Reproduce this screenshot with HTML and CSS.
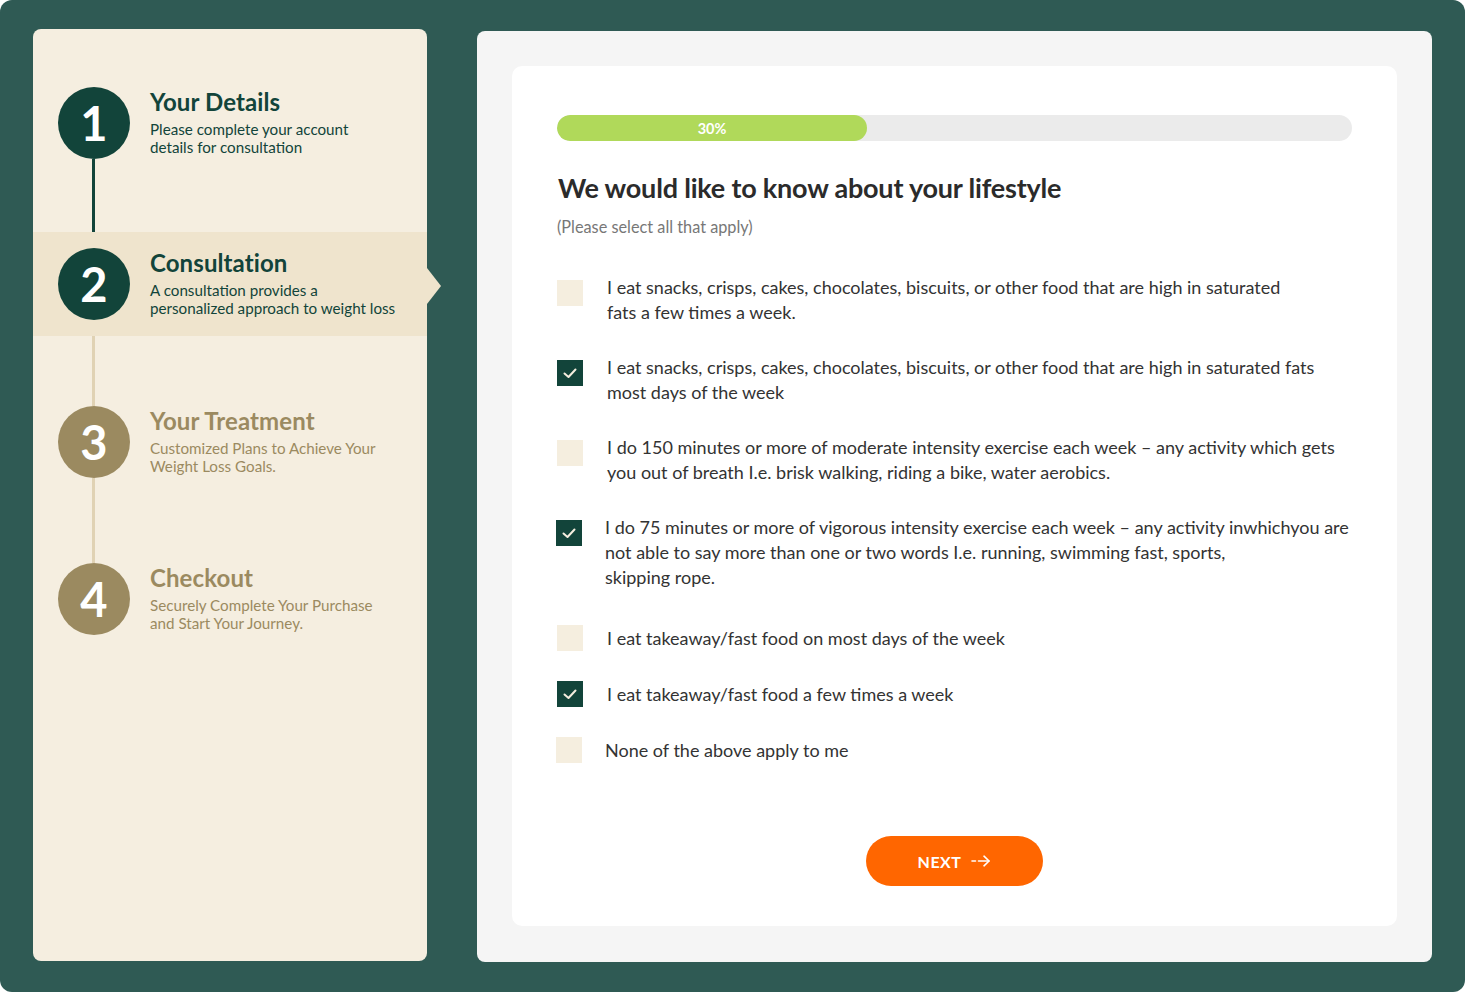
FILE: index.html
```html
<!DOCTYPE html>
<html lang="en">
<head>
<meta charset="utf-8">
<title>Consultation - Lifestyle</title>
<link rel="stylesheet" href="styles.css">
</head>
<body>
<div class="frame">
  <aside class="sidebar">
    <div class="step done">
      <div class="circle">1</div>
      <div class="step-text">
        <div class="step-title">Your Details</div>
        <div class="step-desc">Please complete your account<br>details for consultation</div>
      </div>
    </div>
    <div class="connector dark"></div>
    <div class="step active">
      <div class="circle">2</div>
      <div class="step-text">
        <div class="step-title">Consultation</div>
        <div class="step-desc">A consultation provides a<br>personalized approach to weight loss</div>
      </div>
    </div>
    <div class="connector c2"></div>
    <div class="step todo">
      <div class="circle">3</div>
      <div class="step-text">
        <div class="step-title">Your Treatment</div>
        <div class="step-desc">Customized Plans to Achieve Your<br>Weight Loss Goals.</div>
      </div>
    </div>
    <div class="connector c3"></div>
    <div class="step todo">
      <div class="circle">4</div>
      <div class="step-text">
        <div class="step-title">Checkout</div>
        <div class="step-desc">Securely Complete Your Purchase<br>and Start Your Journey.</div>
      </div>
    </div>
  </aside>

  <main class="panel">
    <section class="card">
      <div class="progress">
        <div class="progress-fill" style="width: 39%">30%</div>
      </div>
      <h1 class="question">We would like to know about your lifestyle</h1>
      <p class="hint">(Please select all that apply)</p>

      <ul class="options">
        <li class="option">
          <span class="box"></span>
          <span class="label">I eat snacks, crisps, cakes, chocolates, biscuits, or other food that are high in saturated<br>fats a few times a week.</span>
        </li>
        <li class="option">
          <span class="box checked"><svg viewBox="0 0 26 26" width="26" height="26"><polyline points="7.5,13.5 11.5,17 18.5,9.5" fill="none" stroke="#f5eedf" stroke-width="2" stroke-linecap="round" stroke-linejoin="round"/></svg></span>
          <span class="label">I eat snacks, crisps, cakes, chocolates, biscuits, or other food that are high in saturated fats<br>most days of the week</span>
        </li>
        <li class="option">
          <span class="box"></span>
          <span class="label">I do 150 minutes or more of moderate intensity exercise each week – any activity which gets<br>you out of breath I.e. brisk walking, riding a bike, water aerobics.</span>
        </li>
        <li class="option shift tall">
          <span class="box checked"><svg viewBox="0 0 26 26" width="26" height="26"><polyline points="7.5,13.5 11.5,17 18.5,9.5" fill="none" stroke="#f5eedf" stroke-width="2" stroke-linecap="round" stroke-linejoin="round"/></svg></span>
          <span class="label">I do 75 minutes or more of vigorous intensity exercise each week – any activity inwhichyou are<br>not able to say more than one or two words I.e. running, swimming fast, sports,<br>skipping rope.</span>
        </li>
        <li class="option single">
          <span class="box"></span>
          <span class="label">I eat takeaway/fast food on most days of the week</span>
        </li>
        <li class="option single">
          <span class="box checked"><svg viewBox="0 0 26 26" width="26" height="26"><polyline points="7.5,13.5 11.5,17 18.5,9.5" fill="none" stroke="#f5eedf" stroke-width="2" stroke-linecap="round" stroke-linejoin="round"/></svg></span>
          <span class="label">I eat takeaway/fast food a few times a week</span>
        </li>
        <li class="option single shift">
          <span class="box"></span>
          <span class="label">None of the above apply to me</span>
        </li>
      </ul>

      <div class="actions">
        <button class="next" type="button">NEXT
          <svg viewBox="0 0 20 12" width="20" height="12"><line x1="1" y1="6" x2="4.5" y2="6" stroke="#fff" stroke-width="1.6" stroke-linecap="round"/><line x1="7.5" y1="6" x2="18" y2="6" stroke="#fff" stroke-width="1.6" stroke-linecap="round"/><polyline points="13,1.2 18,6 13,10.8" fill="none" stroke="#fff" stroke-width="1.6" stroke-linecap="round" stroke-linejoin="round"/></svg>
        </button>
      </div>
    </section>
  </main>
</div>
</body>
</html>
```

FILE: styles.css
```css
* { box-sizing: border-box; }

html, body {
  margin: 0;
  padding: 0;
  background: #ffffff;
}

body {
  font-family: "Lato", "Liberation Sans", sans-serif;
  color: #333333;
}

.frame {
  width: 1465px;
  height: 992px;
  background: #2f5a54;
  border-radius: 12px;
  padding: 29px 33px 30px 33px;
  display: flex;
  gap: 50px;
  align-items: flex-start;
}

/* Sidebar */
.sidebar {
  width: 394px;
  height: 932px;
  background: #f5eee0;
  border-radius: 8px;
  padding-top: 58px;
  display: flex;
  flex-direction: column;
}

.step {
  display: flex;
  align-items: center;
  gap: 20px;
  padding-left: 25px;
  position: relative;
}

.circle {
  width: 72px;
  height: 72px;
  border-radius: 50%;
  flex: 0 0 72px;
  display: flex;
  align-items: center;
  justify-content: center;
  color: #ffffff;
  font-family: "Lato", sans-serif;
  font-weight: 700;
  font-size: 47px;
  line-height: 1;
}

.step-title {
  font-size: 24px;
  font-weight: 700;
  line-height: 27px;
  letter-spacing: 0.1px;
}

.step-desc {
  font-size: 15.2px;
  line-height: 18px;
  margin-top: 5px;
}

.step-text { margin-top: -2px; }

.step.done .circle,
.step.active .circle { background: #12443a; }
.step.done .step-text,
.step.active .step-text { color: #12443a; }

.step.active {
  background: #efe4cd;
  padding-top: 16px;
  padding-bottom: 16px;
}

.step.active::after {
  content: "";
  position: absolute;
  right: -14px;
  top: 50%;
  margin-top: -15px;
  border-top: 18px solid transparent;
  border-bottom: 18px solid transparent;
  border-left: 14px solid #efe4cd;
  transform: translateY(-1px);
}

.step.todo .circle { background: #9b8a60; }
.step.todo .step-text { color: #9b8a60; }

.connector {
  width: 3px;
  margin-left: 59px;
  background: #e0d2b4;
}
.connector.dark { height: 73px; background: #12443a; }
.connector.c2 { height: 70px; }
.connector.c3 { height: 85px; }

/* Main panel */
.panel {
  width: 955px;
  height: 931px;
  margin-top: 2px;
  background: #f5f5f5;
  border-radius: 8px;
  padding: 35px 35px 36px 35px;
}

.card {
  background: #ffffff;
  border-radius: 10px;
  height: 100%;
  padding: 49px 45px 40px 45px;
  display: flex;
  flex-direction: column;
}

.progress {
  height: 26px;
  border-radius: 13px;
  background: #ebebeb;
  overflow: hidden;
}

.progress-fill {
  height: 100%;
  background: #b0d95a;
  border-radius: 13px;
  color: #ffffff;
  font-size: 14.5px;
  font-weight: 700;
  display: flex;
  align-items: center;
  justify-content: center;
}

.question {
  margin: 30px 0 0 1px;
  font-size: 27px;
  line-height: 34px;
  font-weight: 700;
  color: #2b2b2b;
  letter-spacing: -0.2px;
}

.hint {
  margin: 12px 0 0 0;
  font-size: 16.3px;
  line-height: 20px;
  color: #777777;
}

.options {
  list-style: none;
  margin: 38px 0 0 0;
  padding: 0;
  display: flex;
  flex-direction: column;
  gap: 30px;
}

.option {
  display: flex;
  align-items: flex-start;
  gap: 24px;
}

.option.tall { margin-bottom: 5px; }
.option.shift .box { margin-left: -1px; }
.option.shift .label { margin-left: -1px; }

.box {
  width: 26px;
  height: 26px;
  flex: 0 0 26px;
  background: #f5eedf;
  margin-top: 5px;
  display: flex;
}

.box.checked { background: #12443a; }

.option.single { align-items: center; }
.option.single .box { margin-top: 0; }

.label {
  font-size: 18px;
  line-height: 25px;
  color: #333333;
  white-space: nowrap;
}

.actions {
  margin-top: auto;
  display: flex;
  justify-content: center;
}

.next {
  width: 177px;
  height: 50px;
  border: none;
  border-radius: 25px;
  background: #ff6600;
  color: #ffffff;
  font-family: "Lato", sans-serif;
  font-size: 16px;
  font-weight: 700;
  letter-spacing: 0.5px;
  display: flex;
  align-items: center;
  justify-content: center;
  gap: 10px;
  cursor: pointer;
}
```
